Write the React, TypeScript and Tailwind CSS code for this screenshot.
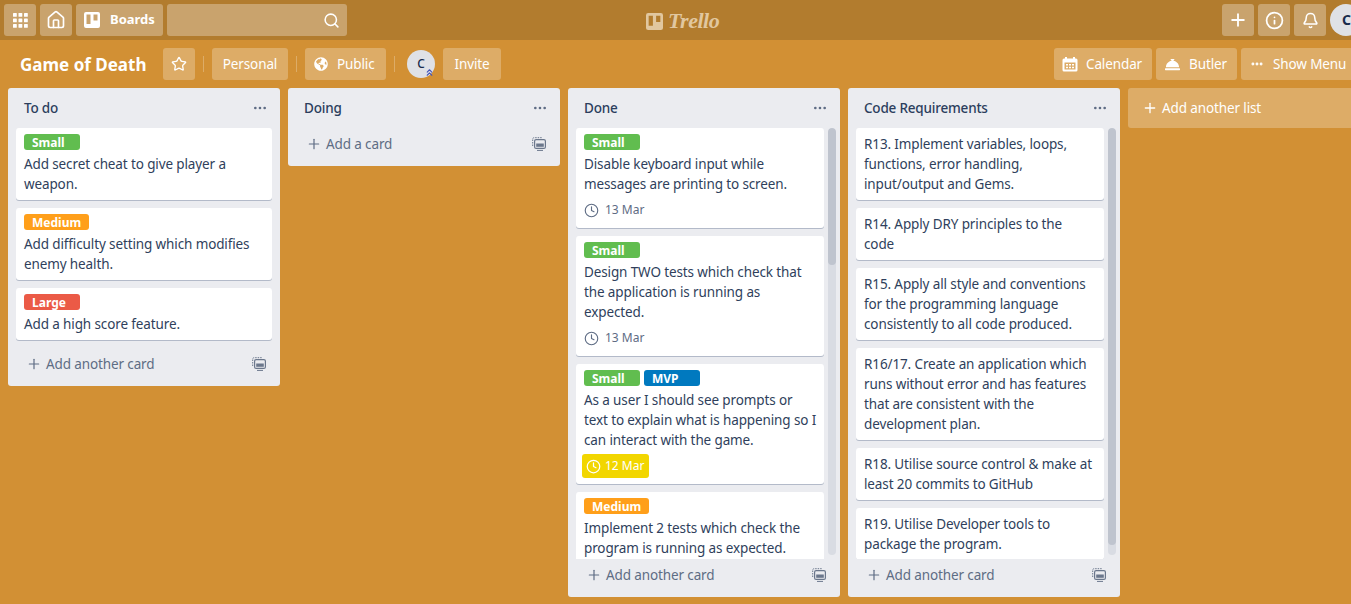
import React from "react";
import { Home, Search, Plus, Info, Bell, Star, Clock, Ellipsis, ChevronsUp } from "lucide-react";
import { FaConciergeBell, FaGlobeAmericas } from "react-icons/fa";

const FONT = "[font-family:'Noto_Sans',Roboto,sans-serif]";
const BODY = "text-[13.5px] tracking-[-0.12px]";

function GridIcon() {
  const cells = [0, 5.5, 11];
  return (
    <svg width="15" height="15" viewBox="0 0 15 15" fill="white">
      {cells.map((y) => cells.map((x) => <rect key={`${x}-${y}`} x={x} y={y} width="3.8" height="3.8" rx="0.6" />))}
    </svg>
  );
}

function BoardsIcon({ size = 16 }: { size?: number }) {
  return (
    <svg width={size} height={size} viewBox="0 0 16 16" className="shrink-0">
      <path fillRule="evenodd" fill="currentColor" d="M2 0h12a2 2 0 0 1 2 2v12a2 2 0 0 1-2 2H2a2 2 0 0 1-2-2V2a2 2 0 0 1 2-2zm.5 2.500v9.500h4V2.500zm7 0v6h4v-6z" />
    </svg>
  );
}

function CalendarIcon() {
  return (
    <svg width="16" height="16" viewBox="0 0 16 16" fill="white" className="shrink-0">
      <path fillRule="evenodd" d="M3 1h2v1.500h6V1h2v1.500h1a1.500 1.500 0 0 1 1.500 1.500v10A1.500 1.500 0 0 1 14 15.500H2A1.500 1.500 0 0 1 .5 14V4A1.500 1.500 0 0 1 2 2.500h1zM2.500 6.500V13.500h11v-7zM4 8h2v1.500H4zm3 0h2v1.500H7zm3 0h2v1.500h-2zM4 10.700h2v1.500H4zm3 0h2v1.500H7zm3 0h2v1.500h-2z" />
    </svg>
  );
}

function TemplateIcon() {
  return (
    <svg width="14" height="14" viewBox="0 0 14 14" fill="none" stroke="#6b778c" className="shrink-0">
      <path d="M.7 9V2A1.300 1.300 0 0 1 2 .7H10" strokeWidth="1" strokeDasharray="1.500 1" />
      <rect x="2.600" y="2.600" width="10.800" height="8.800" rx="1.500" strokeWidth="1.200" />
      <rect x="4.200" y="6.500" width="7.600" height="3.300" fill="#6b778c" stroke="none" />
      <path d="M5 13.400h6" strokeWidth="1" />
    </svg>
  );
}

function TopButton({ children, className = "w-8" }: { children: React.ReactNode; className?: string }) {
  return <div className={`h-8 shrink-0 rounded-[3px] bg-white/30 flex items-center justify-center text-white ${className}`}>{children}</div>;
}

function BarButton({ children, className = "" }: { children: React.ReactNode; className?: string }) {
  return <div className={`h-8 shrink-0 rounded-[3px] bg-white/25 flex items-center text-white ${BODY} whitespace-nowrap ${className}`}>{children}</div>;
}

const Sep = () => <div className="w-px h-4 bg-white/25 mx-2 shrink-0" />;

const labelColor = {
  green: "bg-[#61bd4f]",
  orange: "bg-[#ff9f1a]",
  red: "bg-[#eb5a46]",
  blue: "bg-[#0079bf]",
} as const;

type Label = { text: string; color: keyof typeof labelColor };
type CardData = { labels?: Label[]; lines: string[]; date?: string; due?: boolean };

const S: Label = { text: "Small", color: "green" };
const M: Label = { text: "Medium", color: "orange" };
const L: Label = { text: "Large", color: "red" };
const V: Label = { text: "MVP", color: "blue" };

function Card({ c }: { c: CardData }) {
  return (
    <div className="shrink-0 bg-white rounded-[3px] shadow-[0_1px_0_#b3bac9] mb-2 px-2 pt-1.5 pb-1.5">
      {c.labels && (
        <div className="flex gap-1 mb-1">
          {c.labels.map((l) => (
            <span key={l.text} className={`h-4 min-w-14 rounded-[3px] px-2 text-xs font-bold leading-[18px] text-white ${labelColor[l.color]}`}>{l.text}</span>
          ))}
        </div>
      )}
      <div className={`${BODY} leading-5 text-[#2f3f5c] whitespace-nowrap`}>
        {c.lines.map((t) => <div key={t}>{t}</div>)}
      </div>
      {c.date && (
        c.due ? (
          <div className="mt-1 -ml-0.5 w-[67px] h-6 rounded-[3px] bg-[#f2d600] flex items-center gap-1 px-1 text-white text-xs">
            <Clock size={15} strokeWidth={2} className="shrink-0" />
            <span>{c.date}</span>
          </div>
        ) : (
          <div className="mt-1 h-6 flex items-center gap-1.5 text-[#5e6c84] text-xs">
            <Clock size={15} strokeWidth={1.800} className="shrink-0" />
            <span>{c.date}</span>
          </div>
        )
      )}
    </div>
  );
}

function List({ title, cards, thumb, tall, addText = "Add another card" }: { title: string; cards: CardData[]; thumb?: string; tall?: boolean; addText?: string }) {
  return (
    <div className={`w-[272px] shrink-0 rounded-[3px] bg-[#ebecf0] flex flex-col self-start ${tall ? "h-[509px]" : ""}`}>
      <div className="h-10 flex items-center justify-between pl-4 pr-3 shrink-0">
        <span className="text-[13.5px] tracking-[-0.2px] font-medium text-[#2c3e5d]">{title}</span>
        <Ellipsis size={16} className="text-[#5e6c84]" />
      </div>
      {thumb ? (
        <div className="flex-1 min-h-0 flex pl-2 pr-1">
          <div className="flex-1 min-w-0 overflow-hidden flex flex-col">
            {cards.map((c) => <Card key={c.lines[0]} c={c} />)}
          </div>
          <div className="w-2 ml-1 mb-1 rounded-[4px] bg-[#d9dce3] overflow-hidden shrink-0">
            <div className={`${thumb} rounded-[4px] bg-[#bfc4ce]`} />
          </div>
        </div>
      ) : (
        <div className="px-2 flex flex-col">
          {cards.map((c) => <Card key={c.lines[0]} c={c} />)}
        </div>
      )}
      <div className={`flex items-center justify-between pl-[18px] pr-[14px] shrink-0 text-[#5e6c84] ${BODY} h-8 mb-1.5`}>
        <span className="flex items-center gap-1"><Plus size={16} strokeWidth={1.800} />{addText}</span>
        <TemplateIcon />
      </div>
    </div>
  );
}

export default function App() {
  return (
    <div className={`w-[1351px] h-[604px] overflow-hidden bg-[#d29034] flex flex-col ${FONT}`}>
      <header className="h-10 shrink-0 bg-[#b27c2e] flex items-center px-1 gap-1 relative">
        <TopButton><GridIcon /></TopButton>
        <TopButton><Home size={20} strokeWidth={2} /></TopButton>
        <TopButton className="w-[87px] justify-start pl-2 gap-2.5 font-bold text-[13px]"><BoardsIcon /><span>Boards</span></TopButton>
        <TopButton className="w-[180px] justify-end pr-[7px]"><Search size={17} strokeWidth={2.200} /></TopButton>
        <div className="flex-1" />
        <TopButton><Plus size={20} strokeWidth={2.200} /></TopButton>
        <TopButton><Info size={19} strokeWidth={2.200} /></TopButton>
        <TopButton><Bell size={17} strokeWidth={2.200} /></TopButton>
        <div className="w-8 h-8 mr-[-15px] shrink-0 rounded-full bg-[#dfe1e6] text-[#172b4d] font-bold text-sm flex items-center pl-3">C</div>
        <div className="absolute left-[646px] top-[11px] flex items-center gap-[5px] text-[#e1c79f]">
          <BoardsIcon size={17} />
          <span className="[font-family:'Liberation_Serif',serif] italic font-bold text-[22px] leading-5 tracking-[-0.5px]">Trello</span>
        </div>
      </header>
      <div className="h-12 shrink-0 flex items-center pl-3 pt-2 pb-2">
        <div className="text-white font-bold text-[17px] leading-8 pt-px px-2 whitespace-nowrap w-[151px] shrink-0">Game of Death</div>
        <BarButton className="w-8 justify-center"><Star size={16} strokeWidth={2} /></BarButton>
        <Sep />
        <BarButton className="w-[76px] justify-center">Personal</BarButton>
        <Sep />
        <BarButton className="w-[81px] pl-[9px] gap-[9px]"><FaGlobeAmericas size={14} className="shrink-0" /><span>Public</span></BarButton>
        <Sep />
        <div className="relative w-7 h-7 ml-[4px] mr-2 rounded-full bg-[#dfe1e6] text-[#172b4d] text-xs font-medium flex items-center justify-center shrink-0">
          C
          <ChevronsUp size={11} strokeWidth={2.400} className="absolute right-0 bottom-0 text-[#4355b9]" />
        </div>
        <BarButton className="w-[58px] justify-center">Invite</BarButton>
        <div className="flex-1" />
        <BarButton className="w-[98px] pl-2 gap-2 mr-1"><CalendarIcon /><span>Calendar</span></BarButton>
        <BarButton className="w-[81px] pl-[9px] gap-[9px] mr-1"><FaConciergeBell size={15} className="shrink-0" /><span>Butler</span></BarButton>
        <BarButton className="w-[118px] pl-[9px] gap-[9px] mr-[-8px]"><Ellipsis size={14} strokeWidth={3} className="shrink-0" /><span>Show Menu</span></BarButton>
      </div>
      <main className="flex gap-2 pl-2 h-[516px] items-start">
        <List title="To do" cards={[
          { labels: [S], lines: ["Add secret cheat to give player a", "weapon."] },
          { labels: [M], lines: ["Add difficulty setting which modifies", "enemy health."] },
          { labels: [L], lines: ["Add a high score feature."] },
        ]} />
        <List title="Doing" cards={[]} addText="Add a card" />
        <List title="Done" tall thumb="h-[137px]" cards={[
          { labels: [S], lines: ["Disable keyboard input while", "messages are printing to screen."], date: "13 Mar" },
          { labels: [S], lines: ["Design TWO tests which check that", "the application is running as", "expected."], date: "13 Mar" },
          { labels: [S, V], lines: ["As a user I should see prompts or", "text to explain what is happening so I", "can interact with the game."], date: "12 Mar", due: true },
          { labels: [M], lines: ["Implement 2 tests which check the", "program is running as expected."] },
        ]} />
        <List title="Code Requirements" tall thumb="h-[417px]" cards={[
          { lines: ["R13. Implement variables, loops,", "functions, error handling,", "input/output and Gems."] },
          { lines: ["R14. Apply DRY principles to the", "code"] },
          { lines: ["R15. Apply all style and conventions", "for the programming language", "consistently to all code produced."] },
          { lines: ["R16/17. Create an application which", "runs without error and has features", "that are consistent with the", "development plan."] },
          { lines: ["R18. Utilise source control & make at", "least 20 commits to GitHub"] },
          { lines: ["R19. Utilise Developer tools to", "package the program."] },
        ]} />
        <div className={`w-[272px] h-10 shrink-0 rounded-[3px] bg-white/25 flex items-center gap-1 pl-3.5 text-white ${BODY}`}>
          <Plus size={16} strokeWidth={2} />Add another list
        </div>
      </main>
    </div>
  );
}
